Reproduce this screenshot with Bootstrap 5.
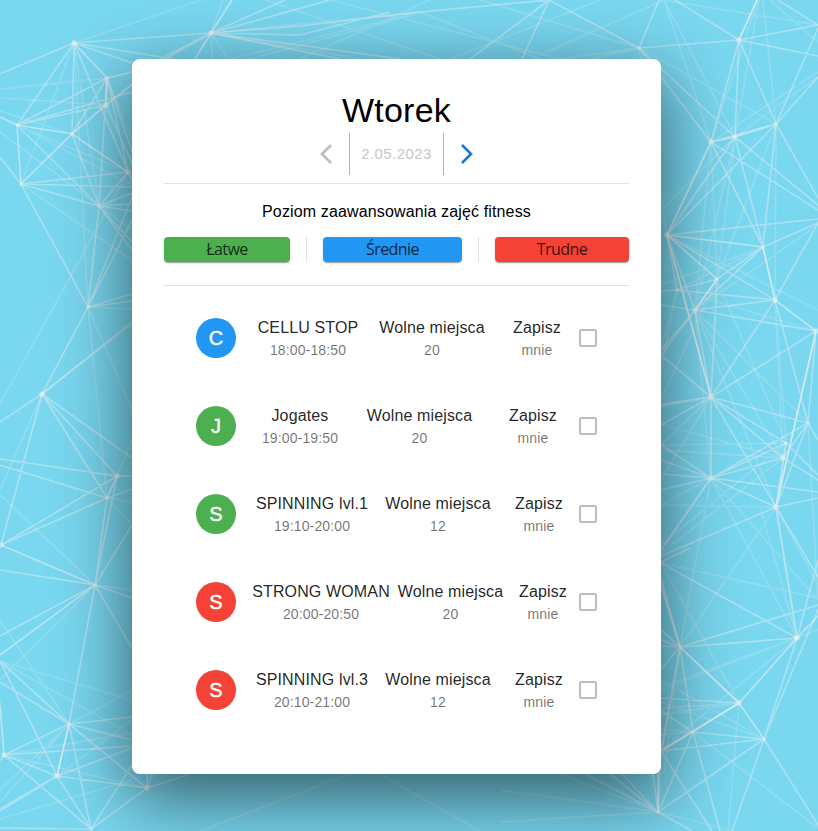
<!DOCTYPE html>
<html lang="pl">
<head>
<meta charset="utf-8">
<meta name="viewport" content="width=device-width, initial-scale=1">
<title>Wtorek</title>
<link href="https://cdn.jsdelivr.net/npm/bootstrap@5.3.0/dist/css/bootstrap.min.css" rel="stylesheet">
<style>
  body { background: #79d7f0; font-family: "Liberation Sans", Arial, sans-serif; color: rgba(0,0,0,.87); height: 831px; }
  .net { width: 818px; height: 831px; z-index: -1; }
  .net path { fill: none; stroke: #fbf3f3; }
  .panel { width: 529px; height: 715px; margin: 59px 0 0 132px; padding: 30px 32px 32px; border-radius: 8px; box-shadow: rgba(0,0,0,.56) 0 22px 70px 4px; }
  .day { font-size: 34px; line-height: 42px; letter-spacing: .25px; color: #000; font-weight: 400; padding-bottom: 2px; }
  .pager { height: 42px; }
  .pager button { width: 46px; background: none; border: 0; }
  .pager svg { fill: none; stroke-width: 2.6; }
  .date { width: 95px; font-size: 15px; letter-spacing: .43px; color: #c6c6c6; border: solid #8cbae8; border-width: 0 1px; }
  .rule { border-top: 1px solid #e0e0e0; }
  .t1 { font-size: 16px; line-height: 24px; letter-spacing: .14px; white-space: nowrap; }
  .t2 { font-size: 14px; line-height: 20px; letter-spacing: .13px; color: rgba(0,0,0,.56); }
  .legend-title { padding-top: 16px; }
  .levels { margin-top: 13px; }
  .levels-end { margin: 23px 0 8px; }
  .level { height: 25px; border-radius: 4px; font: 16px/25px "Open Sans", "Noto Sans", sans-serif; letter-spacing: -.55px; color: rgba(0,0,0,.75); box-shadow: 0 2px 1px -1px rgba(0,0,0,.2), 0 1px 1px rgba(0,0,0,.14), 0 1px 3px rgba(0,0,0,.12); }
  .sep { width: 1px; background: #e0e0e0; }
  .easy { background: #4caf50; } .mid { background: #2196f3; } .hard { background: #f44336; }
  .level.easy { width: 126px; } .level.mid { width: 139px; } .level.hard { width: 134px; }
  .entry { height: 88px; padding-left: 32px; }
  .initial { width: 40px; height: 40px; font-size: 20px; margin-right: 16px; -webkit-text-stroke: .45px #fff; }
  .cells { display: grid; width: 327px; }
  .w-cellu { grid-template-columns: 112px 136px 74px; }
  .w-joga { grid-template-columns: 96px 143px 84px; }
  .w-spin { grid-template-columns: 120px 132px 70px; }
  .w-strong { grid-template-columns: 138px 121px 64px; }
  .tick { width: 18px; height: 18px; margin: 0; border: 2px solid #bdbdbd; border-radius: 2px !important; background: #fff; }
</style>
<script src="https://cdn.jsdelivr.net/npm/bootstrap@5.3.0/dist/js/bootstrap.bundle.min.js"></script>
</head>
<body class="overflow-hidden position-relative">
<svg class="net position-absolute top-0 start-0" viewBox="0 0 818 831" aria-hidden="true">
  <!-- faint threads -->
  <path stroke-width="1.8" stroke-opacity=".18" d="M74 43L21 184M74 43L210 -3M74 43L99 206M74 43L88 307M107 78L0 89M106 105L0 98M72 134L0 111M107 78L140 160M17 125L128 172M17 125L132 185M21 184L132 260M21 184L160 280M99 206L132 230M0 132L99 206M211 33L223 0M211 33L212 59M211 33L228 59M211 33L420 12M211 33L360 59M88 307L132 410M88 307L107 498M88 307L132 309M42 394L0 490M42 394L140 318M0 404L128 172M117 476L132 440M107 498L132 502M107 498L132 524M0 495L95 585M95 585L0 680M95 585L132 590M95 585L1 545M95 585L0 655M69 724L132 690M0 661L132 700M0 620L69 724M4 755L132 733M4 755L147 788M0 790L69 724M0 802L69 724M0 819L132 780M57 776L132 720M0 661L132 735M4 755L0 700M230 59L420 12M250 59L420 13M300 59L430 0M265 0L440 59M330 0L560 59M420 12L540 59M450 59L600 0M480 0L639 48M540 55L664 0M639 48L560 59M639 48L590 59M664 0L711 142M664 0L735 137M664 0L818 25M639 48L776 124M758 0L711 142M759 0L735 137M763 0L776 124M818 77L735 137M818 72L711 142M711 142L667 235M711 142L717 279M735 137L695 310M735 137L717 279M735 137L661 210M711 142L695 310M776 124L775 300M776 124L717 279M667 235L818 310M763 247L677 290M763 247L661 285M818 225L695 310M677 290L816 331M695 310L783 458M695 310L808 423M695 310L776 507M775 300L783 458M775 300L786 443M717 279L786 443M717 279L661 400M677 290L661 350M677 290L661 370M695 310L711 478M711 397L661 445M711 397L661 480M661 424L783 458M661 450L783 458M661 445L786 443M711 478L818 600M711 478L797 638M711 478L680 647M711 478L661 505M661 505L776 507M661 553L783 458M661 545L786 443M776 507L680 647M808 423L818 600M661 563L818 598M661 687L818 630M661 690L797 638M661 563L739 703M776 507L680 647M711 478L661 550M760 507L797 638M776 507L797 638M776 507L818 585M739 703L661 715M739 703L661 708M764 739L661 680M764 739L661 702M739 703L693 732M693 732L818 828M693 732L661 729M693 732L661 735M680 647L664 774M797 638L672 740M739 703L728 831M658 812L735 831M658 812L500 822M500 790L658 812M560 774L658 812M200 831L350 774M380 774L480 831M639 48L667 235M818 42L770 0"/>
  <!-- regular threads -->
  <path stroke-width="1.7" stroke-opacity=".38" d="M0 74L74 43M74 43L17 125M74 43L72 134M74 43L132 63M74 43L128 172M74 43L140 200M74 43L211 33M74 43L180 60M107 78L17 125M107 78L72 134M107 78L128 172M107 78L140 175M107 78L99 206M106 105L17 125M106 105L136 172M17 125L99 206M72 134L99 206M21 184L128 172M21 184L132 187M21 184L99 206M0 157L21 184L88 307M128 172L99 206M99 206L132 193M99 206L132 204M99 206L132 211M99 206L132 250M99 206L132 242M99 206L88 307L132 220M88 307L132 197M132 92L17 125M211 33L132 78M211 33L160 59M211 33L300 26L420 12M211 33L300 35L390 12M211 33L285 0M211 33L340 59M211 33L400 59M211 33L330 0M88 307L132 294M88 307L132 301M88 307L42 394L0 422M42 394L132 322M42 394L1 545M42 394L117 476M42 394L107 498M42 394L132 458M0 459L117 476L1 545L107 498L95 585M0 465L107 498M117 476L95 585M107 498L132 489M95 585L132 525M1 545L95 585L0 655M0 570L95 585L0 636M95 585L132 598M95 585L132 648M95 585L69 724M0 661L69 724M0 682L69 724M0 661L57 776M69 724L4 755M69 724L132 717M69 724L132 740M69 724L147 788M69 724L57 776M69 724L91 829M4 755L57 776M4 755L132 746M4 755L91 829M57 776L147 788M57 776L91 829M57 776L132 748M57 776L0 809M57 776L0 811M4 755L0 706M91 829L132 765M91 829L147 788M91 829L0 828M147 788L147 774M147 788L152 774M147 788L190 774M4 755L0 761M549 0L639 48L659 0M549 0L522 59M549 0L420 12M549 0L470 59M639 48L739 40L818 25M639 48L711 142M639 48L735 137M739 40L675 0M739 40L757 0M739 40L818 56M739 40L711 142M739 40L735 137M739 40L776 124L818 28M776 124L818 77M778 0L818 25M711 142L763 247M735 137L763 247M735 137L818 205M711 142L818 210M776 124L818 198M776 124L763 247M776 124L667 235M735 137L667 235M667 235L818 219M763 247L818 223L775 300M763 247L717 279M763 247L695 310M763 247L775 300M667 235L695 310M667 235L711 397M667 235L677 290L775 300L711 397M677 290L717 279L695 310M677 290L661 291M667 235L775 300M717 279L711 397M695 310L775 300M695 310L816 331M695 310L711 397M695 310L661 305M695 310L661 355M695 310L640 375M816 331L808 423M816 331L776 507M816 331L711 397M775 300L808 423M711 397L808 423M711 397L786 443M711 397L783 458M711 397L776 507M711 397L711 478M711 397L661 404M711 397L661 406M711 397L661 425M711 397L661 355M711 478L808 423M711 478L786 443M711 478L783 458M711 478L776 507M711 478L818 492M711 478L661 445M711 478L661 460M711 478L661 474M711 478L661 490M711 478L661 550M661 556L776 507L808 423L818 440M808 423L783 458M786 443L818 475M783 458L818 480M776 507L818 498M776 507L818 577M661 578L680 647L797 638M661 563L797 638M661 562L690 548M680 647L818 605M680 647L693 732M680 647L739 703M680 647L661 630M680 647L661 640M680 647L661 646M680 647L661 669M680 647L661 751M680 647L658 774M776 507L797 638L764 739M820 605L764 739M797 638L818 560M739 703L661 698M739 703L661 751M739 703L661 750M693 732L764 739L661 751M693 732L661 711M693 732L658 812M693 732L720 831M764 739L658 812M764 739L732 831M764 739L820 828M661 751L658 812L653 774M661 751L712 831M658 812L622 774M658 812L610 774M658 812L585 774M658 812L692 831"/>
  <!-- bright threads -->
  <path stroke-width="1.7" stroke-opacity=".5" d="M74 43L107 78L132 72M107 78L106 105L135 82M106 105L72 134L21 184M17 125L72 134L128 172M0 117L17 125L21 184M232 0L211 33L195 59M117 476L132 476M117 476L107 498M57 776L69 724M739 40L757 0M711 142L735 137L776 124M711 142L776 124M711 142L667 235L763 247L775 300L816 331M667 235L717 279L695 310M667 235L711 397M786 443L776 507L816 331M680 647L739 703L797 638L818 616M739 703L764 739M739 703L661 751M680 647L661 585M658 812L658 774"/>
  <!-- nodes -->
  <path stroke-width="5.5" stroke-linecap="round" stroke-opacity=".45" d="M74 43h.1M211 33h.1M106 105h.1M128 172h.1M42 394h.1M117 476h.1M57 776h.1M147 788h.1M739 40h.1M711 142h.1M667 235h.1M775 300h.1M816 331h.1M695 310h.1M711 397h.1M711 478h.1M783 458h.1M776 507h.1M797 638h.1M739 703h.1M4 755h.1M1 545h.1"/>
  <path stroke-width="3.5" stroke-linecap="round" stroke-opacity=".5" d="M107 78h.1M17 125h.1M72 134h.1M21 184h.1M99 206h.1M88 307h.1M107 498h.1M95 585h.1M69 724h.1M91 829h.1M639 48h.1M735 137h.1M776 124h.1M763 247h.1M717 279h.1M677 290h.1M808 423h.1M786 443h.1M680 647h.1M693 732h.1M764 739h.1M658 812h.1M797 638h.1M42 394h.1M74 43h.1"/>
</svg>

<main class="panel bg-white d-inline-block text-center">
  <h1 class="day m-0">Wtorek</h1>
  <div class="pager d-flex justify-content-center">
    <button class="p-0 d-flex align-items-center justify-content-center" type="button" disabled aria-label="Poprzedni dzień"><svg width="14" height="22" viewBox="0 0 14 22" stroke="#bdbdbd"><path d="M12 2L3 11L12 20"/></svg></button>
    <div class="date d-flex align-items-center justify-content-center">2.05.2023</div>
    <button class="p-0 d-flex align-items-center justify-content-center" type="button" aria-label="Następny dzień"><svg width="14" height="22" viewBox="0 0 14 22" stroke="#1976d2"><path d="M2 2L11 11L2 20"/></svg></button>
  </div>
  <div class="rule mt-2"></div>
  <div class="t1 legend-title text-black">Poziom zaawansowania zajęć fitness</div>
  <div class="levels d-flex justify-content-between">
    <div class="level easy">Łatwe</div>
    <div class="sep"></div>
    <div class="level mid">Średnie</div>
    <div class="sep"></div>
    <div class="level hard">Trudne</div>
  </div>
  <div class="rule levels-end"></div>

  <div class="entry d-flex align-items-center">
    <div class="initial mid rounded-circle text-white d-flex align-items-center justify-content-center">C</div>
    <div class="cells w-cellu">
      <div><div class="t1">CELLU STOP</div><div class="t2">18:00-18:50</div></div>
      <div><div class="t1">Wolne miejsca</div><div class="t2">20</div></div>
      <div><div class="t1">Zapisz</div><div class="t2">mnie</div></div>
    </div>
    <input class="form-check-input tick" type="checkbox" aria-label="Zapisz mnie">
  </div>
  <div class="entry d-flex align-items-center">
    <div class="initial easy rounded-circle text-white d-flex align-items-center justify-content-center">J</div>
    <div class="cells w-joga">
      <div><div class="t1">Jogates</div><div class="t2">19:00-19:50</div></div>
      <div><div class="t1">Wolne miejsca</div><div class="t2">20</div></div>
      <div><div class="t1">Zapisz</div><div class="t2">mnie</div></div>
    </div>
    <input class="form-check-input tick" type="checkbox" aria-label="Zapisz mnie">
  </div>
  <div class="entry d-flex align-items-center">
    <div class="initial easy rounded-circle text-white d-flex align-items-center justify-content-center">S</div>
    <div class="cells w-spin">
      <div><div class="t1">SPINNING lvl.1</div><div class="t2">19:10-20:00</div></div>
      <div><div class="t1">Wolne miejsca</div><div class="t2">12</div></div>
      <div><div class="t1">Zapisz</div><div class="t2">mnie</div></div>
    </div>
    <input class="form-check-input tick" type="checkbox" aria-label="Zapisz mnie">
  </div>
  <div class="entry d-flex align-items-center">
    <div class="initial hard rounded-circle text-white d-flex align-items-center justify-content-center">S</div>
    <div class="cells w-strong">
      <div><div class="t1">STRONG WOMAN</div><div class="t2">20:00-20:50</div></div>
      <div><div class="t1">Wolne miejsca</div><div class="t2">20</div></div>
      <div><div class="t1">Zapisz</div><div class="t2">mnie</div></div>
    </div>
    <input class="form-check-input tick" type="checkbox" aria-label="Zapisz mnie">
  </div>
  <div class="entry d-flex align-items-center">
    <div class="initial hard rounded-circle text-white d-flex align-items-center justify-content-center">S</div>
    <div class="cells w-spin">
      <div><div class="t1">SPINNING lvl.3</div><div class="t2">20:10-21:00</div></div>
      <div><div class="t1">Wolne miejsca</div><div class="t2">12</div></div>
      <div><div class="t1">Zapisz</div><div class="t2">mnie</div></div>
    </div>
    <input class="form-check-input tick" type="checkbox" aria-label="Zapisz mnie">
  </div>
</main>
</body>
</html>
